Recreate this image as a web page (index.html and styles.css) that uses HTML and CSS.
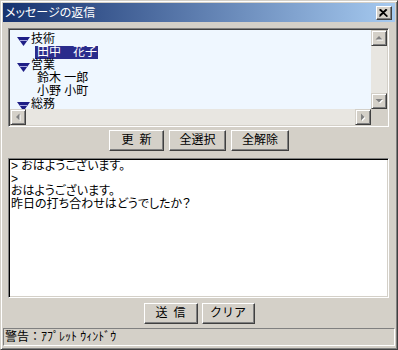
FILE: index.html
```html
<!DOCTYPE html>
<html lang="ja">
<head>
<meta charset="utf-8">
<title>メッセージの返信</title>
<link rel="stylesheet" href="styles.css">
</head>
<body>
<div class="window">
  <div class="titlebar">
    <span class="title">メッセージの返信</span>
    <div class="close"><svg width="9" height="8" viewBox="0 0 9 8"><path d="M0.5 0.5 L8 7.5 M1.5 0.5 L8.5 7.5 M8 0.5 L0.5 7.5 M7 0.5 L0.5 6.5" stroke="#000" stroke-width="1.2" fill="none"/></svg></div>
  </div>

  <div class="tree-panel sunken">
    <div class="tree-content">
      <div class="row group"><svg class="twisty" width="14" height="10" viewBox="0 0 14 10"><polygon points="0,0 13,0 6.5,9" fill="#1e1e86"/><line x1="3" y1="3.5" x2="10" y2="3.5" stroke="#a8a8e0" stroke-width="1"/></svg><span>技術</span></div>
      <div class="row child"><span class="item selected">田中　花子</span></div>
      <div class="row group"><svg class="twisty" width="14" height="10" viewBox="0 0 14 10"><polygon points="0,0 13,0 6.5,9" fill="#1e1e86"/><line x1="3" y1="3.5" x2="10" y2="3.5" stroke="#a8a8e0" stroke-width="1"/></svg><span>営業</span></div>
      <div class="row child"><span class="item">鈴木 一郎</span></div>
      <div class="row child"><span class="item">小野 小町</span></div>
      <div class="row group"><svg class="twisty" width="14" height="10" viewBox="0 0 14 10"><polygon points="0,0 13,0 6.5,9" fill="#1e1e86"/><line x1="3" y1="3.5" x2="10" y2="3.5" stroke="#a8a8e0" stroke-width="1"/></svg><span>総務</span></div>
    </div>
    <div class="vscroll">
      <div class="sb-btn"><svg width="9" height="6" viewBox="0 0 9 6"><polygon points="1.5,5.5 8.5,5.5 5,2" fill="#fff"/><polygon points="0.5,4.5 7.5,4.5 4,1" fill="#808080"/></svg></div>
      <div class="sb-track"></div>
      <div class="sb-btn"><svg width="9" height="6" viewBox="0 0 9 6"><polygon points="1.5,2 8.5,2 5,5.5" fill="#fff"/><polygon points="0.5,1 7.5,1 4,4.5" fill="#808080"/></svg></div>
    </div>
    <div class="hscroll">
      <div class="sb-btn"><svg width="6" height="9" viewBox="0 0 6 9"><polygon points="5.5,1.5 5.5,8.5 2,5" fill="#fff"/><polygon points="4.5,0.5 4.5,7.5 1,4" fill="#808080"/></svg></div>
      <div class="sb-track"></div>
      <div class="sb-btn"><svg width="6" height="9" viewBox="0 0 6 9"><polygon points="2,1.5 2,8.5 5.5,5" fill="#fff"/><polygon points="1,0.5 1,7.5 4.5,4" fill="#808080"/></svg></div>
    </div>
    <div class="corner"></div>
  </div>

  <div class="button-row top-buttons">
    <div class="btn w55">更&ensp;新</div>
    <div class="btn w57">全選択</div>
    <div class="btn w58">全解除</div>
  </div>

  <div class="textarea">&gt; おはようございます。
&gt;
おはようございます。
昨日の打ち合わせはどうでしたか？</div>

  <div class="button-row bottom-buttons">
    <div class="btn w54">送&ensp;信</div>
    <div class="btn w53">クリア</div>
  </div>

  <div class="statusbar">警告：ｱﾌﾟﾚｯﾄ ｳｨﾝﾄﾞｳ</div>
</div>
</body>
</html>
```

FILE: styles.css
```css
* { box-sizing: border-box; }
html, body { margin: 0; padding: 0; }
body {
  width: 398px;
  height: 350px;
  background: #d4d0c8;
  font-family: "Liberation Sans", "Noto Sans CJK JP", sans-serif;
  font-size: 12px;
  color: #000;
}
.window {
  width: 398px;
  height: 350px;
  background: #d4d0c8;
  border: 1px solid;
  border-color: #d4d0c8 #404040 #404040 #d4d0c8;
  box-shadow: inset 1px 1px #ffffff, inset -1px -1px #808080;
  padding: 2px;
  display: flex;
  flex-direction: column;
}
.titlebar {
  height: 19px;
  flex: none;
  display: flex;
  align-items: center;
  justify-content: space-between;
  padding: 0 3px 0 2px;
  background: linear-gradient(90deg, #16326f 0%, #a6caf0 100%);
}
.title {
  color: #fff;
  font-size: 12px;
  line-height: 14px;
  font-feature-settings: "palt";
}
.close {
  width: 16px;
  height: 14px;
  background: #d4d0c8;
  border: 1px solid;
  border-color: #fff #404040 #404040 #fff;
  box-shadow: inset -1px -1px #808080;
  display: flex;
  align-items: center;
  justify-content: center;
  padding-right: 1px;
}
.close svg { display: block; }

.tree-panel {
  flex: none;
  height: 99px;
  margin: 6px 6px 0 5px;
  border: 1px solid;
  border-color: #808080 #fff #fff #808080;
  box-shadow: inset 1px 1px #404040, inset -1px -1px #d4d0c8;
  padding: 1px;
  display: grid;
  grid-template-columns: 1fr 16px;
  grid-template-rows: 1fr 16px;
}
.tree-content {
  background: #eff7ff;
  overflow: hidden;
  padding: 3px 0 0 7px;
}
.row {
  height: 13px;
  line-height: 13px;
  display: flex;
  align-items: flex-start;
  white-space: nowrap;
}
.twisty {
  display: block;
  margin-top: 4px;
  margin-right: 0;
  flex: none;
}
.row.child { padding-left: 18px; }
.item {
  padding: 0 1px 0 2px;
  height: 13px;
}
.item.selected {
  background: #2a2c8c;
  color: #fff;
}
.vscroll {
  display: flex;
  flex-direction: column;
}
.hscroll {
  display: flex;
  flex-direction: row;
}
.sb-btn {
  flex: none;
  width: 16px;
  height: 16px;
  background: #d4d0c8;
  border: 1px solid;
  border-color: #d4d0c8 #404040 #404040 #d4d0c8;
  box-shadow: inset 1px 1px #fff, inset -1px -1px #808080;
  display: flex;
  align-items: center;
  justify-content: center;
}
.sb-btn svg { display: block; }
.sb-track {
  flex: 1;
  background: #e8e6e1;
}
.corner { background: #d4d0c8; }

.button-row {
  flex: none;
  display: flex;
  justify-content: center;
  height: 21px;
}
.top-buttons { margin-top: 3px; gap: 5px; }
.bottom-buttons { margin-top: 5px; gap: 4px; }
.btn {
  height: 21px;
  background: #d4d0c8;
  border: 1px solid;
  border-color: #fff #404040 #404040 #fff;
  box-shadow: inset -1px -1px #808080;
  display: flex;
  align-items: center;
  justify-content: center;
  font-size: 12px;
  line-height: 14px;
  padding-bottom: 1px;
}
.w53 { width: 53px; }
.w54 { width: 54px; }
.w55 { width: 55px; }
.w57 { width: 57px; }
.w58 { width: 58px; }

.textarea {
  flex: none;
  height: 140px;
  margin: 7px 6px 0 5px;
  background: #fff;
  border: 1px solid;
  border-color: #808080 #fff #fff #808080;
  box-shadow: inset 1px 1px #000, inset -1px -1px #d4d0c8;
  padding: 1px 2px 0 2px;
  white-space: pre;
  font-size: 12px;
  line-height: 12.6px;
  font-feature-settings: "palt";
  overflow: hidden;
}
.statusbar {
  flex: none;
  height: 18px;
  margin-top: 4px;
  border: 1px solid;
  border-color: #808080 #fff #fff #808080;
  padding-left: 1px;
  font-size: 12px;
  line-height: 16px;
  white-space: nowrap;
}
```
